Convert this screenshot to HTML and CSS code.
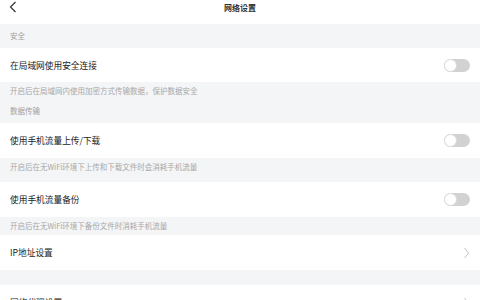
FILE: index.html
```html
<!DOCTYPE html>
<html lang="zh-CN">
<head>
    <meta charset="UTF-8">
    <meta name="viewport" content="width=device-width, initial-scale=1.0">
    <title>网络设置</title>
    <link rel="stylesheet" href="styles.css">
</head>
<body>
    <header class="nav">
        <svg class="nav-back" width="8" height="12" viewBox="0 0 8 12">
            <path d="M6.5 1 L1.5 6 L6.5 11" fill="none" stroke="#333" stroke-width="1.2"/>
        </svg>
        <h1 class="nav-title">网络设置</h1>
    </header>

    <div class="group-label">安全</div>
    <div class="row">
        <span class="row-text">在局域网使用安全连接</span>
        <span class="switch"></span>
    </div>
    <div class="desc">开启后在局域网内使用加密方式传输数据，保护数据安全</div>

    <div class="group-label short">数据传输</div>
    <div class="row">
        <span class="row-text">使用手机流量上传/下载</span>
        <span class="switch"></span>
    </div>
    <div class="desc tall">开启后在无WiFi环境下上传和下载文件时会消耗手机流量</div>
    <div class="row">
        <span class="row-text">使用手机流量备份</span>
        <span class="switch"></span>
    </div>
    <div class="desc">开启后在无WiFi环境下备份文件时消耗手机流量</div>

    <div class="row">
        <span class="row-text">IP地址设置</span>
        <svg class="arrow" width="7" height="12" viewBox="0 0 7 12">
            <path d="M1.5 1 L5.5 6 L1.5 11" fill="none" stroke="#c4c4c4" stroke-width="1"/>
        </svg>
    </div>
    <div class="gap"></div>
    <div class="row">
        <span class="row-text">网络代理设置</span>
        <svg class="arrow" width="7" height="12" viewBox="0 0 7 12">
            <path d="M1.5 1 L5.5 6 L1.5 11" fill="none" stroke="#c4c4c4" stroke-width="1"/>
        </svg>
    </div>
</body>
</html>
```

FILE: styles.css
```css
/* Page */
body {
    margin: 0;
    background: #f4f5f7;
    font-family: "Noto Sans CJK SC", "Noto Sans", sans-serif;
    color: #222;
}

/* Top bar */
.nav {
    position: relative;
    height: 24px;
    background: #fff;
    display: flex;
    justify-content: center;
}

.nav-back {
    position: absolute;
    left: 9px;
    top: 1px;
}

.nav-title {
    margin: 0;
    font-size: 8px;
    font-weight: bold;
    line-height: 16px;
    color: #333;
}

/* Section labels and notes */
.group-label {
    height: 24px;
    line-height: 24px;
    padding: 0 10px;
    font-size: 7.5px;
    color: #a0a0a0;
}

.group-label.short {
    height: 23px;
    line-height: 22px;
}

.desc {
    height: 18px;
    line-height: 18px;
    padding: 0 10px;
    font-size: 7.5px;
    color: #a8a8a8;
}

.desc.tall {
    height: 24px;
}

.gap {
    height: 15px;
}

/* Rows */
.row {
    height: 35px;
    background: #fff;
    display: flex;
    align-items: center;
    justify-content: space-between;
    padding: 0 10px;
}

.row:nth-of-type(2) {
    height: 34px;
}

.row-text {
    font-size: 8.7px;
    color: #222;
}

.switch {
    position: relative;
    width: 26px;
    height: 13px;
    border-radius: 7px;
    background: #d2d2d2;
}

.switch::after {
    content: "";
    position: absolute;
    left: 0;
    top: 0;
    width: 11px;
    height: 11px;
    border-radius: 50%;
    background: #fff;
    border: 1px solid #dcdcdc;
}

.arrow {
    margin-right: 0;
}
```
